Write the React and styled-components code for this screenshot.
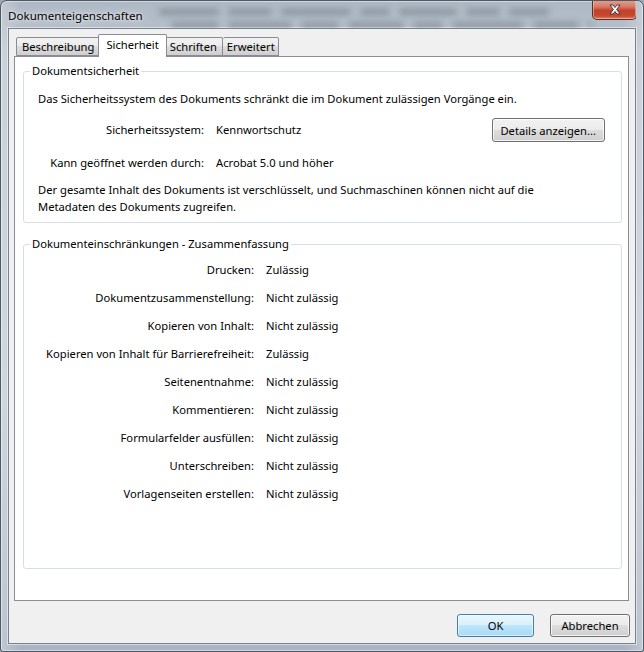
import styled, { createGlobalStyle } from 'styled-components';

const GlobalStyle = createGlobalStyle`
    html, body {
        margin: 0;
        padding: 0;
        background: #9aa6b4;
    }
    body {
        font-family: "Noto Sans", "DejaVu Sans", sans-serif;
        font-size: 11.2px;
        color: #000;
    }
`;

const tabs = ['Beschreibung', 'Sicherheit', 'Schriften', 'Erweitert'];

const restrictions = [
    ['Drucken:', 'Zulässig'],
    ['Dokumentzusammenstellung:', 'Nicht zulässig'],
    ['Kopieren von Inhalt:', 'Nicht zulässig'],
    ['Kopieren von Inhalt für Barrierefreiheit:', 'Zulässig'],
    ['Seitenentnahme:', 'Nicht zulässig'],
    ['Kommentieren:', 'Nicht zulässig'],
    ['Formularfelder ausfüllen:', 'Nicht zulässig'],
    ['Unterschreiben:', 'Nicht zulässig'],
    ['Vorlagenseiten erstellen:', 'Nicht zulässig'],
];

// blurred words of whatever lies behind the glass frame
const blurLines = [
    [60, 44, 70, 30, 58, 34, 40],
    [48, 64, 38, 56, 30, 72, 46, 28],
];

const CloseIcon = () => (
    <svg width="14" height="11" viewBox="0 0 14 11">
        <path
            d="M2 1 L5 1 L7 3.5 L9 1 L12 1 L8.6 5.5 L12 10 L9 10 L7 7.5 L5 10 L2 10 L5.4 5.5 Z"
            fill="#fff"
            stroke="#3b2a2a"
            strokeWidth="0.9"
            strokeLinejoin="round"
        />
    </svg>
);

const App = () => {
    return (
        <>
            <GlobalStyle />
            <Window>
                <TitleBar>
                    <Title>Dokumenteigenschaften</Title>
                    <Backdrop>
                        {blurLines.map((line, i) => (
                            <BlurLine key={i} $indent={i * 12}>
                                {line.map((w, j) => (
                                    <BlurWord key={j} style={{ width: w }} />
                                ))}
                            </BlurLine>
                        ))}
                    </Backdrop>
                    <CloseButton>
                        <CloseIcon />
                    </CloseButton>
                </TitleBar>
                <Client>
                    <TabStrip>
                        {tabs.map((t) => (
                            <Tab key={t} $active={t === 'Sicherheit'}>
                                {t}
                            </Tab>
                        ))}
                    </TabStrip>
                    <Panel>
                        <Group>
                            <Legend>Dokumentsicherheit</Legend>
                            <Intro>
                                Das Sicherheitssystem des Dokuments schränkt die im Dokument zulässigen Vorgänge ein.
                            </Intro>
                            <SecurityGrid>
                                <Label>Sicherheitssystem:</Label>
                                <Value>Kennwortschutz</Value>
                                <Button>Details anzeigen...</Button>
                                <Label>Kann geöffnet werden durch:</Label>
                                <Value>Acrobat 5.0 und höher</Value>
                            </SecurityGrid>
                            <Note>
                                Der gesamte Inhalt des Dokuments ist verschlüsselt, und Suchmaschinen können nicht auf die
                                <br />
                                Metadaten des Dokuments zugreifen.
                            </Note>
                        </Group>
                        <Group $grow>
                            <Legend>Dokumenteinschränkungen - Zusammenfassung</Legend>
                            <RestrictionGrid>
                                {restrictions.map(([label, value]) => (
                                    <Row key={label}>
                                        <Label>{label}</Label>
                                        <Value>{value}</Value>
                                    </Row>
                                ))}
                            </RestrictionGrid>
                        </Group>
                    </Panel>
                    <Footer>
                        <Button $primary $width={77}>OK</Button>
                        <Button $width={80}>Abbrechen</Button>
                    </Footer>
                </Client>
            </Window>
        </>
    );
};

const Window = styled.div`
    width: 644px;
    height: 652px;
    box-sizing: border-box;
    display: flex;
    flex-direction: column;
    padding: 0 7px 7px 7px;
    border: 1px solid #4e5966;
    border-radius: 7px 7px 3px 3px;
    background:
        linear-gradient(90deg, rgba(255, 255, 255, 0.25), transparent 3%, transparent 97%, rgba(255, 255, 255, 0.25)),
        linear-gradient(#aeb8c4, #bcc5cf 8%, #c4ccd6 60%, #aab5c3);
    box-shadow: inset 0 0 0 1px rgba(255, 255, 255, 0.45);
    overflow: hidden;
`;

const TitleBar = styled.div`
    height: 27px;
    display: flex;
    align-items: flex-start;
    overflow: hidden;
`;

const Title = styled.div`
    padding-top: 7px;
    font-size: 11.6px;
    white-space: nowrap;
    color: #000;
    text-shadow: 0 0 8px rgba(255, 255, 255, 0.9), 0 0 3px rgba(255, 255, 255, 0.8);
    flex-shrink: 0;
`;

const Backdrop = styled.div`
    flex: 1;
    display: flex;
    flex-direction: column;
    gap: 7px;
    padding: 8px 20px 0 16px;
    overflow: hidden;
    filter: blur(3px);
    opacity: 0.38;
`;

const BlurLine = styled.div`
    display: flex;
    gap: 9px;
    padding-left: ${(p) => p.$indent}px;
`;

const BlurWord = styled.div`
    height: 6px;
    border-radius: 3px;
    background: #4b5664;
    flex-shrink: 0;
`;

const CloseButton = styled.div`
    flex-shrink: 0;
    width: 43px;
    height: 19px;
    margin-top: -1px;
    margin-right: -1px;
    display: flex;
    align-items: center;
    justify-content: center;
    border: 1px solid #5b3028;
    border-top: none;
    border-radius: 0 0 5px 5px;
    background: linear-gradient(#e2a393, #d67a66 35%, #c0422b 55%, #c84a31 85%, #e08a6e);
    box-shadow: inset 0 0 0 1px rgba(255, 210, 190, 0.5);
`;

const Client = styled.div`
    flex: 1;
    display: flex;
    flex-direction: column;
    background: #f0f0f0;
    border: 1px solid #76828f;
    box-shadow: 0 0 0 1px rgba(255, 255, 255, 0.5);
    padding: 5px 6px 6px 5px;
    min-height: 0;
`;

const TabStrip = styled.div`
    display: flex;
    align-items: flex-end;
    height: 22px;
    padding-left: 2px;
    position: relative;
    z-index: 1;
`;

const Tab = styled.div`
    height: ${(p) => (p.$active ? '23px' : '19px')};
    box-sizing: border-box;
    padding: ${(p) => (p.$active ? '2px 7px 0' : '1px 5px 0')};
    margin: ${(p) => (p.$active ? '0 -2px -1px' : '0')};
    border: 1px solid #898c95;
    border-bottom: ${(p) => (p.$active ? 'none' : '1px solid #898c95')};
    border-left: ${(p) => (p.$active ? '1px solid #898c95' : 'none')};
    border-radius: 2px 2px 0 0;
    background: ${(p) => (p.$active ? '#fff' : 'linear-gradient(#f2f2f2, #ebebeb 50%, #dddddd 50%, #cfcfcf)')};
    position: relative;
    z-index: ${(p) => (p.$active ? 2 : 1)};
    line-height: 16px;
    white-space: nowrap;

    &:first-child {
        border-left: 1px solid #898c95;
    }
    &:last-child {
        padding: 1px 3px 0 4px;
    }
`;

const Panel = styled.div`
    flex: 1;
    display: flex;
    flex-direction: column;
    gap: 13px;
    background: #fff;
    border: 1px solid #898c95;
    padding: 6px 6px 31px 8px;
    min-height: 0;
`;

const Group = styled.fieldset`
    margin: 0;
    padding: 0 16px 7px 14px;
    border: 1px solid #d5dfe5;
    border-radius: 3px;
    min-width: 0;
    ${(p) => (p.$grow ? 'flex: 1;' : '')}
`;

const Legend = styled.legend`
    padding: 0 2px;
    margin-left: -8px;
    line-height: 16px;
`;

const Intro = styled.div`
    line-height: 16px;
    margin-top: 12px;
`;

const SecurityGrid = styled.div`
    display: grid;
    grid-template-columns: 166px 1fr auto;
    column-gap: 12px;
    row-gap: 13px;
    align-items: center;
    margin-top: 11px;
`;

const Label = styled.div`
    text-align: right;
    line-height: 16px;
    white-space: nowrap;
`;

const Value = styled.div`
    line-height: 16px;
    white-space: nowrap;
`;

const Note = styled.div`
    line-height: 17px;
    margin-top: 10px;
`;

const RestrictionGrid = styled.div`
    display: flex;
    flex-direction: column;
    padding-top: 4px;
`;

const Row = styled.div`
    display: grid;
    grid-template-columns: 216px 1fr;
    column-gap: 12px;
    align-items: center;
    height: 28px;
`;

const Button = styled.div`
    box-sizing: border-box;
    height: 24px;
    ${(p) => (p.$width ? `width: ${p.$width}px; height: 23px;` : 'padding: 0 8px 0 7px;')}
    display: flex;
    align-items: center;
    justify-content: center;
    white-space: nowrap;
    border: 1px solid ${(p) => (p.$primary ? '#3c7fb1' : '#707070')};
    border-radius: 3px;
    background: ${(p) =>
        p.$primary
            ? 'linear-gradient(#eaf6fd, #d9f0fc 50%, #bee6fd 50%, #a7d9f5)'
            : 'linear-gradient(#f2f2f2, #ebebeb 50%, #dddddd 50%, #cfcfcf)'};
    box-shadow: inset 0 0 0 1px ${(p) => (p.$primary ? 'rgba(255, 255, 255, 0.6)' : 'rgba(255, 255, 255, 0.75)')};
`;

const Footer = styled.div`
    display: flex;
    justify-content: flex-end;
    gap: 16px;
    padding-top: 13px;
    margin-right: -1px;
`;

export default App;
